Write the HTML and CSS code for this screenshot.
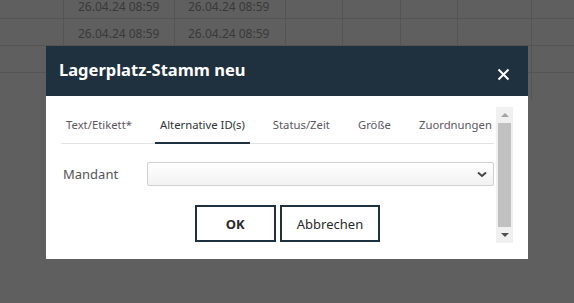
FILE: index.html
```html
<!DOCTYPE html>
<html lang="de">
<head>
  <meta charset="UTF-8" />
  <meta name="viewport" content="width=device-width, initial-scale=1.0" />
  <title>Lagerplatz-Stamm neu</title>
  <link rel="stylesheet" href="styles.css">
</head>
<body>
  <div class="grid">
    <div class="row">
      <div class="cell c1"></div>
      <div class="cell c2">26.04.24 08:59</div>
      <div class="cell c3">26.04.24 08:59</div>
      <div class="cell c4"></div>
      <div class="cell c5"></div>
      <div class="cell c6"></div>
      <div class="cell c7"></div>
      <div class="cell c8"></div>
    </div>
    <div class="row">
      <div class="cell c1"></div>
      <div class="cell c2">26.04.24 08:59</div>
      <div class="cell c3">26.04.24 08:59</div>
      <div class="cell c4"></div>
      <div class="cell c5"></div>
      <div class="cell c6"></div>
      <div class="cell c7"></div>
      <div class="cell c8"></div>
    </div>
    <div class="row">
      <div class="cell c1"></div>
      <div class="cell c2"></div>
      <div class="cell c3"></div>
      <div class="cell c4"></div>
      <div class="cell c5"></div>
      <div class="cell c6"></div>
      <div class="cell c7"></div>
      <div class="cell c8"></div>
    </div>
    <div class="row last">
      <div class="cell c1"></div>
      <div class="cell c2"></div>
      <div class="cell c3"></div>
      <div class="cell c4"></div>
      <div class="cell c5"></div>
      <div class="cell c6"></div>
      <div class="cell c7"></div>
      <div class="cell c8"></div>
    </div>
  </div>

  <div class="modal">
    <div class="modal-header">
      <h2>Lagerplatz-Stamm neu</h2>
      <button class="close" aria-label="Schließen">
        <svg width="13" height="13" viewBox="0 0 13 13"><path d="M1.5 1.5 L11.5 11.5 M11.5 1.5 L1.5 11.5" stroke="#fff" stroke-width="2" fill="none"/></svg>
      </button>
    </div>
    <div class="modal-body">
      <div class="content">
        <div class="tabs">
          <div class="tab">Text/Etikett*</div>
          <div class="tab active">Alternative ID(s)</div>
          <div class="tab">Status/Zeit</div>
          <div class="tab">Größe</div>
          <div class="tab">Zuordnungen</div>
        </div>
        <div class="field">
          <label>Mandant</label>
          <div class="select">
            <svg width="10" height="7" viewBox="0 0 10 7"><path d="M1 1.5 L5 5 L9 1.5" stroke="#444" stroke-width="2" fill="none"/></svg>
          </div>
        </div>
        <div class="actions">
          <button class="btn ok">OK</button>
          <button class="btn">Abbrechen</button>
        </div>
      </div>
      <div class="scrollbar">
        <div class="arrow up"></div>
        <div class="thumb"></div>
        <div class="arrow down"></div>
      </div>
    </div>
  </div>
</body>
</html>
```

FILE: styles.css
```css
html, body {
  margin: 0;
  padding: 0;
  height: 100%;
  overflow: hidden;
}
body {
  font-family: "Noto Sans", "Open Sans", sans-serif;
  background: #5f5f5f;
  position: relative;
}

/* grid behind the overlay */
.grid {
  margin-top: -8px;
}
.row {
  display: flex;
  height: 27px;
  border-bottom: 1px solid #545454;
  box-sizing: border-box;
}
.row.last {
  border-bottom: none;
}
.cell {
  border-right: 1px solid #545454;
  box-sizing: border-box;
  font-size: 12px;
  color: #393939;
  line-height: 14px;
  padding: 8px 0 0 13px;
  white-space: nowrap;
}
.c1 { width: 64px; }
.c2 { width: 111px; padding-left: 14px; }
.c3 { width: 111px; }
.c4 { width: 57px; }
.c5 { width: 58px; }
.c6 { width: 57px; }
.c7 { width: 74px; }
.c8 { flex: 1; border-right: none; }

/* dialog */
.modal {
  position: absolute;
  left: 46px;
  top: 46px;
  width: 482px;
  height: 213px;
  background: #fff;
}
.modal-header {
  height: 50px;
  background: #1f313e;
  display: flex;
  align-items: center;
  justify-content: space-between;
  padding: 0 18px 0 13px;
}
.modal-header h2 {
  margin: 0;
  color: #fff;
  font-size: 16.5px;
  font-weight: bold;
  margin-top: -4px;
}
.close {
  background: none;
  border: none;
  padding: 0;
  margin-top: 6px;
  display: flex;
}

.modal-body {
  display: flex;
  padding: 11px 15px 0 15px;
}
.content {
  flex: 1;
  min-width: 0;
  margin-right: 2px;
}

.tabs {
  display: flex;
  border-bottom: 1px solid #e2e2e2;
  height: 37px;
  box-sizing: border-box;
}
.tab {
  font-size: 11.3px;
  color: #5e5660;
  padding: 10px 5px 0;
  margin-right: 18px;
  white-space: nowrap;
  box-sizing: border-box;
}
.tab:last-child {
  margin-right: 0;
}
.tab.active {
  color: #2f3336;
  border-bottom: 2px solid #1f313e;
  margin-bottom: -1px;
}

.field {
  display: flex;
  align-items: center;
  margin-top: 18px;
}
.field label {
  width: 86px;
  flex-shrink: 0;
  padding-left: 2px;
  box-sizing: border-box;
  font-size: 13px;
  color: #555;
}
.select {
  flex: 1;
  height: 24px;
  box-sizing: border-box;
  border: 1px solid #cfcfcf;
  border-radius: 2px;
  background: linear-gradient(#ffffff, #f2f2f2);
  display: flex;
  align-items: center;
  justify-content: flex-end;
  padding-right: 6px;
}

.actions {
  display: flex;
  justify-content: center;
  gap: 4px;
  margin-top: 19px;
  padding-left: 20px;
}
.btn {
  height: 37px;
  border: 2px solid #1f313e;
  background: #fff;
  font-family: "Noto Sans", "Open Sans", sans-serif;
  font-size: 13px;
  color: #2a2a2a;
  padding: 0 15px;
}
.btn.ok {
  width: 81px;
  font-weight: bold;
}

.scrollbar {
  width: 17px;
  height: 136px;
  flex-shrink: 0;
  background: #f0f0f0;
  display: flex;
  flex-direction: column;
  align-items: center;
}
.thumb {
  width: 13px;
  flex: 1;
  background: #c1c1c1;
}
.arrow {
  width: 0;
  height: 0;
  border-left: 4px solid transparent;
  border-right: 4px solid transparent;
  margin: 6px 0;
}
.arrow.up {
  border-bottom: 4px solid #a3a3a3;
}
.arrow.down {
  border-top: 4px solid #505050;
}
```
